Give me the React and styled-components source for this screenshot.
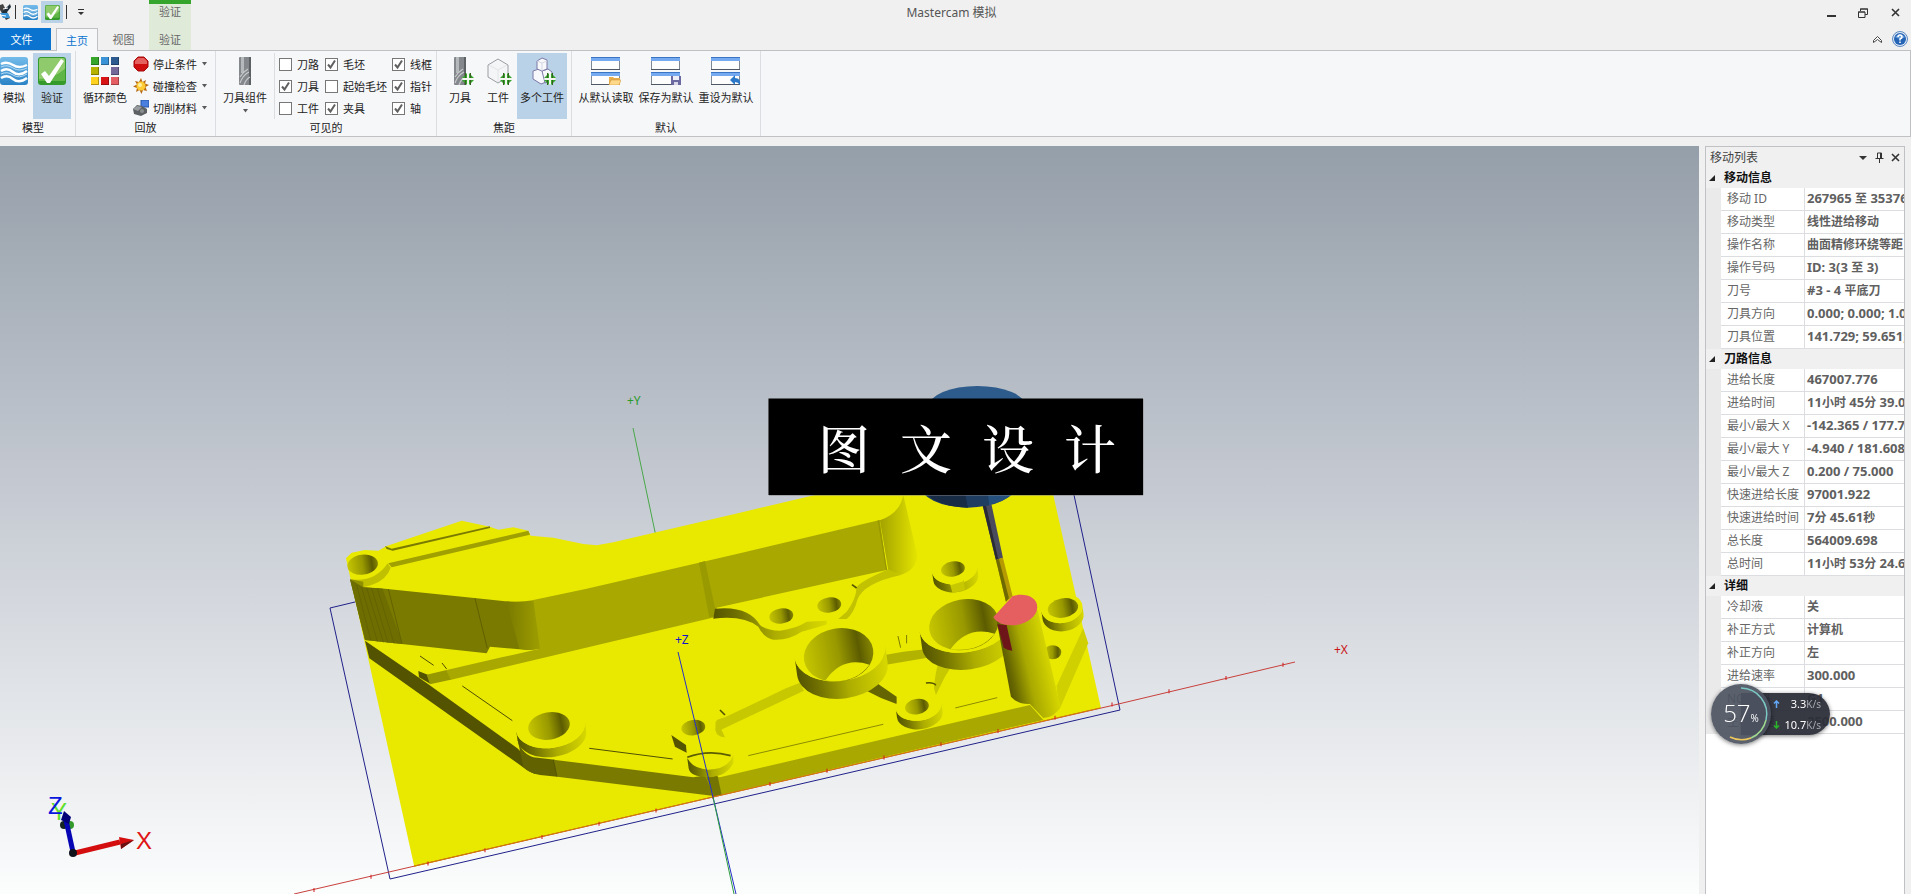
//IMPORTS
//-Modules
import React, { useState } from 'react'
import styled, { createGlobalStyle, css } from 'styled-components'


//DATA
const colors = {
    chrome: '#f0f0f0',
    ribbon: '#f6f7f9',
    line: '#bfc1c4',
    softLine: '#dcdde0',
    selected: '#bad2e7',
    blue: '#0a74d0',
    context: '#dfead9',
    contextTop: '#35a52c',
    text: '#222222',
    muted: '#666666',
    part: '#e9e900',
    wall: '#a8a800',
    shade: '#7a7a00',
    deep: '#545400',
    rim: '#c8c800',
}

const visibleItems = [
    { id: 'path', label: '刀路', on: false },
    { id: 'stock', label: '毛坯', on: true },
    { id: 'wire', label: '线框', on: true },
    { id: 'tool', label: '刀具', on: true },
    { id: 'initial', label: '起始毛坯', on: false },
    { id: 'gnomon', label: '指针', on: true },
    { id: 'workpiece', label: '工件', on: false },
    { id: 'fixture', label: '夹具', on: true },
    { id: 'axes', label: '轴', on: true },
]

const sections = [
    {
        title: '移动信息',
        rows: [
            ['移动 ID', '267965 至 35376'],
            ['移动类型', '线性进给移动'],
            ['操作名称', '曲面精修环绕等距'],
            ['操作号码', 'ID: 3(3 至 3)'],
            ['刀号', '#3 - 4 平底刀'],
            ['刀具方向', '0.000; 0.000; 1.0'],
            ['刀具位置', '141.729; 59.651;'],
        ],
    },
    {
        title: '刀路信息',
        rows: [
            ['进给长度', '467007.776'],
            ['进给时间', '11小时 45分 39.0'],
            ['最小/最大 X', '-142.365 / 177.7'],
            ['最小/最大 Y', '-4.940 / 181.608'],
            ['最小/最大 Z', '0.200 / 75.000'],
            ['快速进给长度', '97001.922'],
            ['快速进给时间', '7分 45.61秒'],
            ['总长度', '564009.698'],
            ['总时间', '11小时 53分 24.6'],
        ],
    },
    {
        title: '详细',
        rows: [
            ['冷却液', '关'],
            ['补正方式', '计算机'],
            ['补正方向', '左'],
            ['进给速率', '300.000'],
            ['NC 代码', 'G1'],
            ['主轴转速', '2500.000'],
        ],
    },
]


//STYLES
const GlobalStyle = createGlobalStyle`
    *{
        box-sizing: border-box;
    }
    body{
        margin: 0;
        overflow: hidden;
        font-family: "Noto Sans", "Noto Sans CJK SC", sans-serif;
        font-size: 11px;
        color: ${colors.text};
    }
    button{
        padding: 0;
        border: 0;
        background: none;
        font: inherit;
        color: inherit;
    }
    svg{
        display: block;
        flex: none;
    }
`
const Page = styled.div`
    display: flex;
    flex-direction: column;
    height: 100vh;
    overflow: hidden;
    background: ${colors.chrome};
`

//-Title bar
const TitleBar = styled.header`
    display: grid;
    grid-template-columns: 1fr auto 1fr;
    height: 28px;
`
const TitleLeft = styled.div`
    display: flex;
`
const QuickAccess = styled.div`
    display: flex;
    align-items: flex-start;
    width: 149px;
    padding-top: 1px;
`
const AppMark = styled.div`
    width: 12px;
    padding-top: 3px;
`
const QuickButton = styled.button`
    display: flex;
    align-items: center;
    justify-content: center;
    width: 22px;
    height: 22px;
    background: ${({ $selected }) => ($selected ? colors.selected : 'none')};
`
const QuickLine = styled.div`
    width: 1px;
    height: 14px;
    margin: 4px 3px;
    background: #333333;
`
const ContextTitle = styled.div`
    width: 42px;
    border-top: 4px solid ${colors.contextTop};
    background: ${colors.context};
    line-height: 16px;
    text-align: center;
    color: ${colors.muted};
`
const WindowTitle = styled.h1`
    margin: 0;
    padding-right: 8px;
    font-size: 12px;
    font-weight: 400;
    line-height: 25px;
    color: #555555;
`
const WindowButtons = styled.div`
    display: flex;
    justify-content: flex-end;

    button{
        display: flex;
        align-items: center;
        justify-content: center;
        width: 32px;
        height: 25px;
    }
`

//-Tabs
const TabRow = styled.nav`
    display: flex;
    height: 23px;
    border-bottom: 1px solid ${colors.line};
`
const FileTab = styled.button`
    width: 51px;
    margin-right: 5px;
    background: ${colors.blue};
    color: #ffffff;
    padding-right: 8px;
`
const Tab = styled.button`
    width: ${({ $wide }) => ($wide ? '51px' : '42px')};
    color: ${colors.muted};

    ${({ $active }) => $active && css`
        height: 23px;
        border: 1px solid ${colors.line};
        border-bottom: 0;
        background: ${colors.ribbon};
        color: ${colors.blue};
    `}
    ${({ $context }) => $context && css`
        background: ${colors.context};
    `}
`
const TabTools = styled.div`
    display: flex;
    align-items: center;
    gap: 10px;
    margin-left: auto;
    padding-right: 3px;
`

//-Ribbon
const Ribbon = styled.section`
    display: flex;
    height: 86px;
    margin-left: -9px;
    margin-bottom: 9px;
    border-right: 1px solid ${colors.line};
    border-bottom: 1px solid ${colors.line};
    background: ${colors.ribbon};
`
const Group = styled.div`
    display: flex;
    flex-direction: column;
    padding: 2px 4px 0;
    border-right: 1px solid ${colors.softLine};
`
const GroupBody = styled.div`
    display: flex;
    height: 66px;
`
const GroupLabel = styled.div`
    line-height: 17px;
    text-align: center;
`
const BigButton = styled.button`
    display: flex;
    flex-direction: column;
    align-items: center;
    min-width: ${({ $wide }) => ($wide ? '60px' : '38px')};
    padding: ${({ $wide }) => ($wide ? '4px 0 0' : '4px 3px 0')};
    background: ${({ $selected }) => ($selected ? colors.selected : 'none')};
    line-height: 18px;
    white-space: nowrap;

    span{
        margin-top: 4px;
        margin-bottom: 2px;
    }
`
const SmallColumn = styled.div`
    display: flex;
    flex-direction: column;
`
const SmallButton = styled.button`
    display: flex;
    align-items: center;
    gap: 4px;
    height: 22px;
    padding: 0 3px;
    white-space: nowrap;
`
const CheckGrid = styled.div`
    display: grid;
    grid-template-columns: 46px 67px auto;
    grid-auto-rows: 22px;
    margin-left: 4px;
    padding-left: 4px;
    border-left: 1px solid ${colors.softLine};
`
const CheckLabel = styled.label`
    display: flex;
    align-items: center;
    gap: 5px;
    white-space: nowrap;

    input{
        appearance: none;
        width: 13px;
        height: 13px;
        margin: 0;
        border: 1px solid #777777;
        background: #ffffff;
    }
    input:checked{
        background: #ffffff url("data:image/svg+xml,%3Csvg xmlns='http://www.w3.org/2000/svg' viewBox='0 0 11 11'%3E%3Cpath d='M2 5.5L4.500 8.500L9 1.500' fill='none' stroke='%23606060' stroke-width='2'/%3E%3C/svg%3E");
    }
`

//-Workspace
const Workspace = styled.main`
    display: flex;
    flex: 1;
    min-height: 0;
`
const Viewport = styled.div`
    flex: 1;
    min-width: 0;
    background: linear-gradient(#959fa9, #c5cad2 46%, #fcfdfd);

    svg{
        width: 100%;
        height: 100%;
    }
`
const Panel = styled.aside`
    width: 200px;
    margin: 0 6px;
    border: 1px solid ${colors.line};
    border-bottom: 0;
    background: #ffffff;
    overflow: hidden;
    font-size: 12px;
`
const PanelHeader = styled.div`
    display: flex;
    align-items: center;
    height: 21px;
    padding: 0 1px 0 4px;
    background: ${colors.chrome};
    color: #444444;

    h2{
        flex: 1;
        margin: 0;
        font-size: 12px;
        font-weight: 400;
        line-height: 20px;
    }
    button{
        display: flex;
        align-items: center;
        justify-content: center;
        width: 16px;
        height: 20px;
    }
`
const PropertyTable = styled.table`
    width: 100%;
    table-layout: fixed;
    border-collapse: separate;
    border-spacing: 0;
`
const SectionCell = styled.th`
    height: 20px;
    padding: 0;
    background: ${colors.chrome};
    text-align: left;

    button{
        display: flex;
        align-items: center;
        gap: 9px;
        width: 100%;
        height: 20px;
        padding-left: 3px;
        font-weight: 700;
        line-height: 18px;
        color: #111111;
    }
`
const Gutter = styled.td`
    padding: 0;
    background: #eaeaea;
`
const NameCell = styled.th`
    height: 23px;
    padding: 0 0 0 6px;
    border-right: 1px solid ${colors.softLine};
    border-bottom: 1px solid ${colors.softLine};
    font-weight: 400;
    line-height: 20px;
    text-align: left;
    white-space: nowrap;
    color: ${colors.muted};
`
const ValueCell = styled.td`
    height: 23px;
    padding: 0 0 0 2px;
    border-bottom: 1px solid ${colors.softLine};
    overflow: hidden;
    font-weight: 700;
    line-height: 20px;
    white-space: nowrap;
    color: #606060;
`
const Latin = styled.span`
    font-size: 13px;
    line-height: 16px;
`

//-Overlays
const Banner = styled.div`
    position: fixed;
    top: 50%;
    left: 50%;
    display: flex;
    gap: 30px;
    padding: 8px 27px 9px 50px;
    transform: translate(-50%, -50%);
    background: #000000;
    font-family: "Noto Serif CJK SC", "Noto Sans CJK SC", serif;
    font-size: 52px;
    font-weight: 500;
    line-height: 80px;
    color: #ffffff;
`
const Meter = styled.div`
    position: fixed;
    top: 684px;
    right: 81px;
    display: flex;
    align-items: center;
`
const MeterDial = styled.div`
    position: relative;
    z-index: 1;
    display: flex;
    align-items: baseline;
    justify-content: center;
    width: 60px;
    height: 60px;
    margin-right: -30px;
    border-radius: 50%;
    background: rgba(76, 82, 96, 0.92);
    box-shadow: 0 1px 4px rgba(0, 0, 0, 0.5);
    font-family: "Open Sans", "Noto Sans", sans-serif;
    font-size: 24px;
    font-weight: 300;
    line-height: 58px;
    color: #ffffff;

    small{
        font-size: 10px;
        font-weight: 400;
    }
    svg{
        position: absolute;
        inset: 0;
    }
`
const MeterRates = styled.div`
    display: grid;
    grid-template-columns: 10px 38px;
    align-items: center;
    justify-content: end;
    width: 89px;
    height: 42px;
    padding-right: 9px;
    border-radius: 0 21px 21px 0;
    background: rgba(42, 45, 55, 0.94);
    box-shadow: 0 1px 4px rgba(0, 0, 0, 0.5);
    line-height: 20px;
    text-align: right;
    white-space: nowrap;
    color: #ffffff;

    small{
        font-size: 10px;
        color: #a6a8ae;
    }
`


//ICONS
const DownArrow = () => (
    <svg width="7" height="4" viewBox="0 0 7 4"><path d="M1 0H6L3.500 3.500Z" fill="#5a5a5a" /></svg>
)
const WavesIcon = ({ size }) => (
    <svg width={size} height={size} viewBox="0 0 28 28">
        <defs>
            <linearGradient id="waves" x2="0" y2="1">
                <stop offset="0" stopColor="#74bbea" />
                <stop offset="1" stopColor="#2a83c6" />
            </linearGradient>
        </defs>
        <rect width="28" height="28" rx="3" fill="url(#waves)" />
        <path d="M1 7Q7 4 13 8T27 8M1 14Q7 10 13 15T27 14M1 21Q7 17 13 22T27 21" fill="none" stroke="#ffffff" strokeWidth="2.500" />
        <path d="M1 10Q7 7 13 11T27 11M1 17Q7 14 13 18T27 17" fill="none" stroke="#b5dbf4" strokeWidth="1" />
    </svg>
)
const CheckIcon = ({ size }) => (
    <svg width={size} height={size} viewBox="0 0 28 28">
        <rect width="28" height="28" rx="3" fill="#339a2b" />
        <path d="M1 3Q1 1 3 1H25Q27 1 27 3V12Q14 24 1 22Z" fill="#8fcb6d" />
        <path d="M1 22Q16 22 27 12V24H1Z" fill="#5fb546" />
        <path d="M3 17L7 14L11 19L23 2L26 4L12 26H9Z" fill="#ffffff" />
    </svg>
)
const AppIcon = () => (
    <svg width="11" height="16" viewBox="0 0 11 16">
        <path d="M0 1L3 0L10 14L6 16L0 6Z" fill="#444444" />
        <path d="M10 0L11 3L4 12L2 8Z" fill="#22303c" />
        <path d="M0 9H8L10 14H3Z" fill="#3b96d8" />
        <path d="M0 11L6 12M3 5L8 4" stroke="#ffffff" />
    </svg>
)
const swatches = [
    [0, 0, '#35a52c'], [10, 0, '#3a93d6'], [20, 0, '#2c5a8e'],
    [0, 10, '#b5b200'], [20, 10, '#74689a'],
    [0, 20, '#ffd21f'], [10, 20, '#d81313'], [20, 20, '#e45e63'],
]
const ColorsIcon = () => (
    <svg width="28" height="28" viewBox="0 0 28 28">
        {swatches.map(([x, y, fill]) => (
            <g key={fill}>
                <rect x={x} y={y} width="8" height="8" fill={fill} />
                <path d={`M${x} ${y + 7.5}H${x + 7.5}V${y}`} fill="none" stroke="#000000" strokeOpacity="0.3" />
            </g>
        ))}
    </svg>
)
const StopIcon = () => (
    <svg width="16" height="16" viewBox="0 0 16 16">
        <path d="M5 1H11L15 5V11L11 15H5L1 11V5Z" fill="#cf0e10" stroke="#a30a0a" />
        <path d="M5 2H11L14 5V8H2V5Z" fill="#e4615f" />
    </svg>
)
const SparkIcon = () => (
    <svg width="16" height="16" viewBox="0 0 16 16">
        <path d="M8 0L9.500 4L13 2L12 5.500L16 7L12.500 9L14 13L10 12L8.500 16L6.500 12L3 14L4 10L0 8.500L4 6.500L2 3L6 4Z" fill="#b56a12" />
        <circle cx="8" cy="8" r="4.500" fill="#ffcb35" />
        <circle cx="7" cy="7" r="2" fill="#fff0a0" />
    </svg>
)
const MaterialIcon = () => (
    <svg width="16" height="16" viewBox="0 0 16 16">
        <rect x="8" y="0" width="8" height="7" fill="#4a7fe0" stroke="#2455a8" />
        <path d="M0 9L4 5L9 6L14 9V13L8 16L1 14Z" fill="#5d6164" />
        <path d="M0 9L4 6L9 7L5 11Z" fill="#9a9da0" />
        <circle cx="9" cy="11" r="2" fill="#8a8d90" />
    </svg>
)
const ToolShape = ({ x }) => (
    <g transform={`translate(${x} 0)`}>
        <rect width="12" height="28" rx="1" fill="#84878b" />
        <rect x="2" width="3" height="16" fill="#b6b9bc" />
        <rect x="10" width="2" height="28" fill="#5e6164" />
        <path d="M1 26Q4 18 10 15M1 20Q4 15 9 12M5 28Q7 22 11 20" fill="none" stroke="#c8cacc" strokeWidth="1.200" />
    </g>
)
const FocusMark = () => (
    <g>
        <path d="M22 16L28 22L22 28L16 22Z" fill="#f2f6ee" />
        <path d="M16 21L21 16V21ZM28 21L23 16V21ZM16 23L21 28V23ZM28 23L23 28V23Z" fill="#35a52c" />
        <path d="M19.500 16V21M24.500 16V21M19.500 23V28M24.500 23V28" stroke="#35601f" />
    </g>
)
const ToolPartsIcon = () => (
    <svg width="28" height="28" viewBox="0 0 28 28"><ToolShape x={8} /></svg>
)
const FocusToolIcon = () => (
    <svg width="28" height="28" viewBox="0 0 28 28"><ToolShape x={8} /><FocusMark /></svg>
)
const FocusPartIcon = () => (
    <svg width="28" height="28" viewBox="0 0 28 28">
        <path d="M14 2L24 8V20L14 26L4 20V8Z" fill="#f4f5f7" stroke="#9a9da2" />
        <path d="M5 8L14 13L23 8M14 13V25" fill="none" stroke="#e2e4e7" />
        <FocusMark />
    </svg>
)
const FocusManyIcon = () => (
    <svg width="28" height="28" viewBox="0 0 28 28">
        <g fill="#f7f8fb" stroke="#7c79a8">
            <path d="M5 14L11 12L18 15V25L13 27L5 22Z" />
            <path d="M14 14L20 12L24 15V23L17 26Z" />
            <path d="M14 1L19 3V12L14 14L9 12V4Z" />
        </g>
        <path d="M9 4L14 6L19 4M14 6V14" fill="none" stroke="#d5d5e2" />
        <FocusMark />
    </svg>
)
const badges = {
    open: (
        <g>
            <path d="M18 20H22L23 21H29V28H18Z" fill="#e8ad4d" />
            <path d="M20 23H30L28 28H18Z" fill="#ffd98a" stroke="#c98f34" strokeWidth="0.500" />
        </g>
    ),
    save: (
        <g>
            <path d="M20 19H30V29H22L20 27Z" fill="#6a6aa0" />
            <rect x="22" y="19" width="6" height="4" fill="#eeeef6" />
            <rect x="23" y="25" width="4" height="4" fill="#d8d8e8" />
        </g>
    ),
    reset: <path d="M19 23L24 18V21Q30 21 29 28Q27 25 24 25V28Z" fill="#2c78c8" />,
}
const DefaultsIcon = ({ badge }) => (
    <svg width="30" height="28" viewBox="0 0 30 28">
        {[0, 15].map((y) => (
            <g key={y}>
                <rect x="0.500" y={y + 0.5} width="28" height="12" fill="#fdfdfe" stroke="#7d8796" />
                <rect y={y} width="29" height="4" fill="#75aaf0" />
                <path d={`M0 ${y + 0.5}H29`} stroke="#3a74c4" />
                <path d={`M0 ${y + 12.5}H29`} stroke="#4d5764" />
            </g>
        ))}
        {badges[badge]}
    </svg>
)
const CloseIcon = () => (
    <svg width="9" height="9" viewBox="0 0 9 9"><path d="M1 1L8 8M8 1L1 8" stroke="#333333" strokeWidth="1.600" /></svg>
)
const HelpIcon = () => (
    <svg width="16" height="16" viewBox="0 0 16 16">
        <circle cx="8" cy="8" r="7.500" fill="#dfe9f5" stroke="#5c8ac4" />
        <circle cx="8" cy="8" r="6" fill="#2563b4" />
        <path d="M3 6Q8 1 13 6Q8 9 3 6Z" fill="#6fa3dd" />
        <path d="M6 6Q6 4 8 4T10 6Q10 7 8 8V9.500M8 10.500V12" fill="none" stroke="#ffffff" strokeWidth="1.500" />
    </svg>
)


//SCENE
//-Raised ring: side wall, top face, bored hole
const Boss = ({ x, y, rx, ry, depth, holeX = x, holeY = y, holeRx, holeRy, floor }) => (
    <g>
        <g transform={`rotate(-8 ${x} ${y})`}>
            <path
                d={`M${x - rx} ${y}A${rx} ${ry} 0 0 0 ${x + rx} ${y}V${y + depth}A${rx} ${ry} 0 0 1 ${x - rx} ${y + depth}Z`}
                fill="url(#side)"
            />
            <ellipse cx={x} cy={y} rx={rx} ry={ry} fill={colors.part} />
        </g>
        <g transform={`rotate(-10 ${holeX} ${holeY})`}>
            <ellipse cx={holeX} cy={holeY} rx={holeRx} ry={holeRy} fill="url(#bore)" />
            {floor && (
                <path
                    d={`M${holeX - holeRx * 0.5} ${holeY + holeRy * 0.86}Q${holeX + holeRx * 0.1} ${holeY + holeRy * 0.05} ${holeX + holeRx * 0.82} ${holeY + holeRy * 0.56}Q${holeX + holeRx * 0.3} ${holeY + holeRy * 1.2} ${holeX - holeRx * 0.5} ${holeY + holeRy * 0.86}Z`}
                    fill={colors.part}
                />
            )}
        </g>
    </g>
)

const Gradients = () => (
    <defs>
        <linearGradient id="bore">
            <stop offset="0" stopColor="#c6c600" />
            <stop offset="0.500" stopColor="#989800" />
            <stop offset="0.800" stopColor="#5c5c00" />
            <stop offset="1" stopColor="#878700" />
        </linearGradient>
        <linearGradient id="side">
            <stop offset="0" stopColor="#545400" />
            <stop offset="0.200" stopColor="#6e6e00" />
            <stop offset="0.550" stopColor="#adad00" />
            <stop offset="1" stopColor="#d8d800" />
        </linearGradient>
        <linearGradient id="bend">
            <stop offset="0" stopColor="#7a7a00" />
            <stop offset="1" stopColor="#a0a000" />
        </linearGradient>
        <linearGradient id="corner">
            <stop offset="0" stopColor="#a2a200" />
            <stop offset="1" stopColor="#e4e400" />
        </linearGradient>
        <linearGradient id="post" gradientUnits="userSpaceOnUse" x1="905" y1="850" x2="1060" y2="815">
            <stop offset="0" stopColor="#545400" />
            <stop offset="0.150" stopColor="#6a6a00" />
            <stop offset="0.450" stopColor="#a8a800" />
            <stop offset="1" stopColor="#e0e000" />
        </linearGradient>
    </defs>
)

const LeftHalf = () => (
    <g>
        {/* sheet and upper face */}
        <path d="M283 1100L78 175L95 158L135 150L175 152L200 138L425 62L510 80L535 89L580 82L625 92L632 107L700 113L790 132L830 136L880 127L1260 38L1485 -15L1600 -60H2190L2343 623L1180 890Z" fill={colors.part} />
        <path d="M195 138L215 146L510 79L510 84L218 152L200 147Z" fill={colors.shade} />
        <path d="M205 190L625 92L630 104L215 202Z" fill="#a0a000" />
        <path d="M90 238Q165 248 203 190L212 203Q200 240 155 255L130 262Z" fill="#c0c000" />
        <path d="M90 238L130 245L130 262Z" fill="#8f8f00" />
        <ellipse cx="128" cy="194" rx="46" ry="30" fill="url(#bore)" transform="rotate(-8 128 194)" />
        {/* tall walls */}
        <path d="M90 238L130 262L180 265L470 295L570 305L600 306L660 446L625 450L510 440L500 460L245 432L135 420Z" fill={colors.shade} />
        <path d="M90 238L130 262L188 266L248 432L135 420Z" fill="#6e6e00" />
        <path d="M110 255L152 420M125 262L172 424M140 264L190 427M155 265L204 428M172 265L222 430M205 267L246 431" stroke="#626200" strokeWidth="3" />
        <path d="M465 295L502 445" stroke="#5f5f00" strokeWidth="3" />
        <path d="M560 304Q600 308 645 300L666 446L625 450L598 446Z" fill="url(#bend)" />
        <path d="M640 300L800 266L1260 160L1680 60L1700 210L1190 323V350L390 540L380 510L545 472L660 446Z" fill={colors.wall} />
        <path d="M1137 188L1168 352L1190 347L1155 183Z" fill="#999900" />
        {/* left ledge */}
        <path d="M135 422L295 532L325 553L592 745Q640 790 645 822Q625 815 600 795L148 475Z" fill={colors.deep} />
        <path d="M295 513L325 525L332 552L297 532Z" fill={colors.deep} />
        <path d="M320 524L380 510L392 539L330 553Z" fill="#979700" />
        <path d="M300 468L341 496M427 558L577 662M808 745L1058 777M366 489L380 507" fill="none" stroke="#4d4d00" strokeWidth="3" />
        {/* front ledge */}
        <path d="M590 705Q600 760 640 772L705 779L712 830L660 825Q625 818 610 800Z" fill="#626200" />
        <path d="M700 779L1120 832L1165 825L1182 888L712 830Z" fill={colors.shade} />
        <path d="M700 780L711 830" stroke={colors.deep} strokeWidth="3" />
        <path d="M1155 825L1200 832L2130 615L2170 660L1182 889Z" fill={colors.wall} />
        <path d="M1155 820L1190 815L1205 884L1182 889Z" fill="#747400" />
        <Boss x={692} y={680} rx={104} ry={64} depth={27} holeX={687} holeY={678} holeRx={63} holeRy={41} />
        {/* cup by the origin */}
        <path d="M1054 705L1098 735L1100 758L1065 740Z" fill={colors.deep} />
        <path d="M1102 775Q1165 840 1240 765L1240 790Q1220 830 1165 832Q1110 830 1106 805Z" fill="url(#side)" />
        <path d="M1102 772Q1165 740 1240 765Q1225 808 1165 809Q1115 806 1102 772Z" fill={colors.part} />
        <path d="M1102 772Q1165 748 1232 767" fill="none" stroke="#5c5c00" strokeWidth="5" />
        <ellipse cx="1120" cy="683" rx="36" ry="23" fill="url(#bore)" transform="rotate(-8 1120 683)" />
        <path d="M1187 665L1205 655V690L1215 712Q1190 712 1186 690Z" fill={colors.rim} />
    </g>
)

const RightHalf = () => (
    <g transform="translate(1140 -360)">
        <path d="M540 421Q600 400 610 345L652 525Q650 570 600 586L565 570Z" fill="url(#corner)" />
        <path d="M535 421L560 570" stroke="#989800" strokeWidth="4" />
        {/* pocket edges */}
        <path d="M45 686Q105 680 140 698Q165 710 180 735Q200 752 240 752Q290 745 320 725L380 722V734L305 755Q265 782 220 779Q190 772 175 740Q130 705 40 716Z" fill="url(#side)" />
        <path d="M565 568Q480 605 470 622Q468 660 440 695L415 717H440Q462 700 472 660Q490 610 600 586Z" fill="#c2c200" />
        <path d="M456 614L470 624" stroke={colors.deep} strokeWidth="5" />
        <ellipse cx="244" cy="708" rx="36" ry="23" fill="url(#bore)" transform="rotate(-8 244 708)" />
        <ellipse cx="388" cy="675" rx="36" ry="23" fill="url(#bore)" transform="rotate(-8 388 675)" />
        {/* webs between the bosses */}
        <path d="M50 1020L75 1012L258 925L300 908L312 932L62 1050Q50 1040 50 1020Z" fill={colors.rim} />
        <path d="M60 990L75 1005" stroke={colors.deep} strokeWidth="5" />
        <path d="M550 826L610 815L690 806L700 830L550 856Z" fill="#b2b200" />
        <path d="M594 768L602 803M620 765V790" stroke={colors.shade} strokeWidth="3" />
        <path d="M485 912L525 905L590 950V972Q540 955 495 930Z" fill="#646400" />
        <path d="M718 838H768L735 890L708 945L702 925Q705 880 718 838Z" fill={colors.rim} />
        <path d="M678 909Q700 906 708 916" fill="none" stroke={colors.deep} strokeWidth="4" />
        <path d="M145 1127L550 1033M766 984L892 953" stroke="#8b8b00" strokeWidth="3" />
        <Boss x={420} y={815} rx={137} ry={88} depth={53} holeX={416} holeY={825} holeRx={105} holeRy={80} floor />
        <Boss x={795} y={735} rx={137} ry={82} depth={52} holeX={792} holeY={734} holeRx={105} holeRy={76} floor />
        <Boss x={764} y={568} rx={68} ry={44} depth={25} holeX={759} holeY={567} holeRx={36} holeRy={23} />
        <path d="M750 612L792 600L795 630L758 640Z" fill={colors.rim} />
        <path d="M750 600L790 592V604L752 616Z" fill={colors.part} />
        <Boss x={656} y={978} rx={69} ry={44} depth={26} holeX={651} holeY={980} holeRx={36} holeRy={23} />
        <Boss x={1086} y={685} rx={62} ry={44} depth={25} holeX={1089} holeY={684} holeRx={46} holeRy={29} />
        <ellipse cx="1058" cy="817" rx="26" ry="21" fill="url(#bore)" />
        <path d="M1070 918L1150 745L1165 790L1078 990Z" fill="#d0d000" />
        {/* post being cut */}
        <path d="M890 722L933 950Q955 974 990 972L1030 1014Q1065 1012 1082 980L1013 690Z" fill="url(#post)" />
        <path d="M892 733L920 735L937 812Q922 812 911 802Z" fill="#6d1518" />
        {/* cutter and holder */}
        <path d="M848 375H875L909 533L888 540Z" fill="#4a4b5c" />
        <path d="M848 375H858L895 538L888 540Z" fill="#292a33" />
        <path d="M888 540L909 533L938 648L918 665Z" fill="#b59a00" />
        <path d="M888 540L897 537L927 655L918 665Z" fill="#6f6a00" />
        <path d="M880 712L938 648C975 638 1012 650 1012 682C1012 712 975 736 935 736C908 736 890 728 880 712Z" fill="#e55f60" />
        <ellipse cx="832" cy="80" rx="146" ry="62" fill="#2d5b8b" />
        <ellipse cx="804" cy="312" rx="146" ry="71" fill="#1f3d61" />
        <path d="M665 320L792 320L804 383Q720 380 683 345Z" fill="#182c46" />
        <path d="M862 320H948L935 345Q910 365 868 375Z" fill="#26517e" />
    </g>
)

const tickMarks = Array.from({ length: 18 }, (_, i) => [314 + i * 57, 890 - i * 13.25])

const Scene = () => (
    <svg viewBox="0 146 1699 748" role="img" aria-label="实体模型">
        <Gradients />
        <path d="M633 428L658 546" stroke="#48a848" />
        <g transform="translate(320 500) scale(0.3333)">
            <LeftHalf />
            <RightHalf />
        </g>
        <path d="M355 602L330 608L390 879L1120 710L1074 495" fill="none" stroke="#20208a" />
        <path d="M294 894L713 797L1110 706L1295 662" fill="none" stroke="#c8403c" />
        <path d="M414 866L713 797L1100 708" fill="none" stroke="#d08000" />
        {tickMarks.map(([x, y]) => (
            <path key={x} d={`M${x} ${y - 2}V${y + 2}`} stroke="#d01818" />
        ))}
        <path d="M678 652L713 797L736 894" fill="none" stroke="#2430c8" />
        <path d="M713 797L734 894" fill="none" stroke="#2f9e3f" />
        <g fontFamily="Noto Sans, sans-serif" fontSize="12">
            <text x="627" y="405" fill="#2b9a2b">+Y</text>
            <text x="675" y="644" fill="#1414c8">+Z</text>
            <text x="1334" y="654" fill="#c81414">+X</text>
        </g>
        {/* orientation triad */}
        <g fontFamily="Liberation Sans, sans-serif">
            <text x="51" y="820" fontSize="24" fill="#5ee02c">Y</text>
            <circle cx="64" cy="825" r="4" fill="#15251f" />
            <circle cx="70" cy="825" r="4" fill="#339a2b" />
            <path d="M73 852L66 820" stroke="#0606b4" strokeWidth="5" />
            <path d="M64 811L71 817L69 824L61 820Z" fill="#000078" />
            <path d="M75 853L120 842" stroke="#d40e0e" strokeWidth="5" />
            <path d="M119 837L134 840L121 849Z" fill="#d40e0e" />
            <path d="M121 844L134 840L121 849Z" fill="#6b1010" />
            <circle cx="73" cy="853" r="4" fill="#10131c" />
            <text x="48" y="814" fontSize="24" fill="#0a16dc">Z</text>
            <text x="136" y="849" fontSize="24" fill="#e01414">X</text>
        </g>
    </svg>
)


//COMPONENTS
const VisibleOptions = () => {
    const [items, setItems] = useState(visibleItems)
    const toggle = (id) => setItems(items.map((item) => (item.id === id ? { ...item, on: !item.on } : item)))

    return (
        <CheckGrid>
            {items.map(({ id, label, on }) => (
                <CheckLabel key={id} htmlFor={id}>
                    <input id={id} type="checkbox" checked={on} onChange={() => toggle(id)} />
                    {label}
                </CheckLabel>
            ))}
        </CheckGrid>
    )
}

//-Latin runs are set one size larger than the Chinese ones
const MixedText = ({ children }) => (
    children.split(/([\u4e00-\u9fff]+)/).map((run, i) => (
        i % 2 || !run ? run : <Latin key={i}>{run}</Latin>
    ))
)

const MovePanel = () => {
    const [closed, setClosed] = useState([])
    const toggle = (title) => setClosed(closed.includes(title) ? closed.filter((t) => t !== title) : [...closed, title])

    return (
        <Panel>
            <PanelHeader>
                <h2>移动列表</h2>
                <button aria-label="菜单"><svg width="8" height="4" viewBox="0 0 8 4"><path d="M0 0H8L4 4Z" fill="#333333" /></svg></button>
                <button aria-label="固定">
                    <svg width="9" height="11" viewBox="0 0 9 11"><path d="M2.500 6V1H6.500V6M5.500 1V6M0.500 6.500H8.500M4.500 7V11" fill="none" stroke="#333333" /></svg>
                </button>
                <button aria-label="关闭"><CloseIcon /></button>
            </PanelHeader>
            <PropertyTable>
                <colgroup>
                    <col style={{ width: 15 }} />
                    <col style={{ width: 84 }} />
                    <col />
                </colgroup>
                {sections.map(({ title, rows }) => (
                    <tbody key={title}>
                        <tr>
                            <SectionCell colSpan={3} scope="rowgroup">
                                <button onClick={() => toggle(title)}>
                                    <svg width="6" height="6" viewBox="0 0 6 6"><path d="M6 0V6H0Z" fill="#222222" /></svg>
                                    {title}
                                </button>
                            </SectionCell>
                        </tr>
                        {!closed.includes(title) && rows.map(([name, value]) => (
                            <tr key={name}>
                                <Gutter />
                                <NameCell scope="row">{name}</NameCell>
                                <ValueCell><MixedText>{value}</MixedText></ValueCell>
                            </tr>
                        ))}
                    </tbody>
                ))}
            </PropertyTable>
        </Panel>
    )
}

const NetMeter = () => (
    <Meter>
        <MeterDial>
            57<small>%</small>
            <svg width="60" height="60" viewBox="0 0 60 60" fill="none" strokeWidth="1.500">
                <path d="M30 4A26 26 0 0 1 55 36" stroke="#7cc8c4" />
                <path d="M55 36A26 26 0 0 1 40 54" stroke="#a0d890" />
                <path d="M40 54A26 26 0 0 1 19 53" stroke="#f0c95c" />
            </svg>
        </MeterDial>
        <MeterRates>
            <svg width="7" height="8" viewBox="0 0 7 8"><path d="M3.500 8V1M1 3.500L3.500 1L6 3.500" fill="none" stroke="#62a8f5" strokeWidth="1.500" /></svg>
            <div>3.3<small>K/s</small></div>
            <svg width="7" height="8" viewBox="0 0 7 8"><path d="M3.500 0V7M1 4.500L3.500 7L6 4.500" fill="none" stroke="#2bb52b" strokeWidth="1.500" /></svg>
            <div>10.7<small>K/s</small></div>
        </MeterRates>
    </Meter>
)


//MAIN COMPONENT
const App = () => {
    return (
        <Page>
            <GlobalStyle />
            <TitleBar>
                <TitleLeft>
                    <QuickAccess>
                        <AppMark><AppIcon /></AppMark>
                        <QuickLine />
                        <QuickButton aria-label="模拟"><WavesIcon size={15} /></QuickButton>
                        <QuickButton $selected aria-label="验证"><CheckIcon size={15} /></QuickButton>
                        <QuickLine />
                        <QuickButton aria-label="自定义">
                            <svg width="6" height="6" viewBox="0 0 6 6"><path d="M0 0H6V1H0ZM0 3H6L3 6Z" fill="#333333" /></svg>
                        </QuickButton>
                    </QuickAccess>
                    <ContextTitle>验证</ContextTitle>
                </TitleLeft>
                <WindowTitle>Mastercam 模拟</WindowTitle>
                <WindowButtons>
                    <button aria-label="最小化"><svg width="9" height="9" viewBox="0 0 9 9"><path d="M0 7H9V9H0Z" fill="#333333" /></svg></button>
                    <button aria-label="还原">
                        <svg width="10" height="10" viewBox="0 0 10 10"><path d="M2.500 3V1H9.500V6.500H7M0.500 4H7V9.500H0.500ZM2 1H10M0 4H7" fill="none" stroke="#333333" /></svg>
                    </button>
                    <button aria-label="关闭窗口"><CloseIcon /></button>
                </WindowButtons>
            </TitleBar>
            <TabRow>
                <FileTab>文件</FileTab>
                <Tab $active>主页</Tab>
                <Tab $wide>视图</Tab>
                <Tab $context>验证</Tab>
                <TabTools>
                    <button aria-label="折叠功能区">
                        <svg width="9" height="7" viewBox="0 0 9 7"><path d="M0.500 4.500L4.500 0.500L8.500 4.500V6.500L4.500 3.500L0.500 6.500Z" fill="#ffffff" stroke="#444444" /></svg>
                    </button>
                    <button aria-label="帮助"><HelpIcon /></button>
                </TabTools>
            </TabRow>
            <Ribbon>
                <Group>
                    <GroupBody>
                        <BigButton><WavesIcon size={28} /><span>模拟</span></BigButton>
                        <BigButton $selected><CheckIcon size={28} /><span>验证</span></BigButton>
                    </GroupBody>
                    <GroupLabel>模型</GroupLabel>
                </Group>
                <Group>
                    <GroupBody>
                        <BigButton><ColorsIcon /><span>循环颜色</span></BigButton>
                        <SmallColumn>
                            <SmallButton><StopIcon />停止条件<DownArrow /></SmallButton>
                            <SmallButton><SparkIcon />碰撞检查<DownArrow /></SmallButton>
                            <SmallButton><MaterialIcon />切削材料<DownArrow /></SmallButton>
                        </SmallColumn>
                    </GroupBody>
                    <GroupLabel>回放</GroupLabel>
                </Group>
                <Group>
                    <GroupBody>
                        <BigButton><ToolPartsIcon /><span>刀具组件</span><DownArrow /></BigButton>
                        <VisibleOptions />
                    </GroupBody>
                    <GroupLabel>可见的</GroupLabel>
                </Group>
                <Group>
                    <GroupBody>
                        <BigButton><FocusToolIcon /><span>刀具</span></BigButton>
                        <BigButton><FocusPartIcon /><span>工件</span></BigButton>
                        <BigButton $selected><FocusManyIcon /><span>多个工件</span></BigButton>
                    </GroupBody>
                    <GroupLabel>焦距</GroupLabel>
                </Group>
                <Group>
                    <GroupBody>
                        <BigButton $wide><DefaultsIcon badge="open" /><span>从默认读取</span></BigButton>
                        <BigButton $wide><DefaultsIcon badge="save" /><span>保存为默认</span></BigButton>
                        <BigButton $wide><DefaultsIcon badge="reset" /><span>重设为默认</span></BigButton>
                    </GroupBody>
                    <GroupLabel>默认</GroupLabel>
                </Group>
            </Ribbon>
            <Workspace>
                <Viewport><Scene /></Viewport>
                <MovePanel />
            </Workspace>
            <Banner>
                <span>图</span><span>文</span><span>设</span><span>计</span>
            </Banner>
            <NetMeter />
        </Page>
    )
}
export default App
